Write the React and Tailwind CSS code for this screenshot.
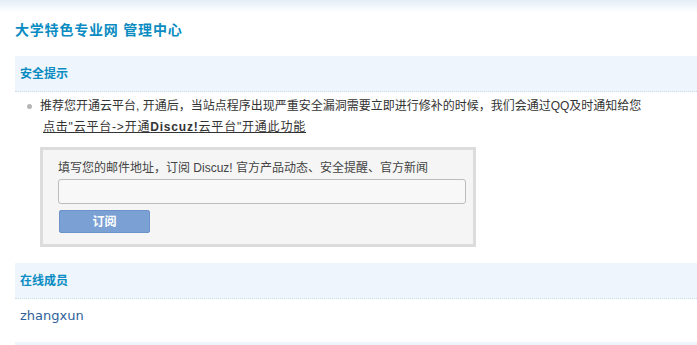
import React from "react";

const cjk = { fontFamily: '"Liberation Sans", "Noto Sans CJK SC", sans-serif' };

export default function App() {
    return (
        <div className="min-h-[345px] bg-white text-[12px] text-[#333] overflow-hidden" style={cjk}>
            {/* top fade */}
            <div className="h-[12px] bg-gradient-to-b from-[#e4edf6] to-white" />

            <div className="pl-[15px]">
                <h3 className="mt-[8px] h-[20px] leading-[20px] text-[14px] font-bold tracking-[0.8px] text-[#0a8cc2]">
                    大学特色专业网 管理中心
                </h3>

                {/* 安全提示 */}
                <div className="mt-[16px] h-[36px] flex items-center pl-[5px] bg-[#eef5fc] border-b border-dotted border-[#c8dcea]">
                    <span className="font-bold text-[#0a8cc2]">安全提示</span>
                </div>

                <ul className="mt-[4px] pl-[12px]">
                    <li className="flex">
                        <span className="mt-[8px] w-[5px] h-[5px] rounded-full bg-[#b5b5b5] shrink-0" />
                        <div className="ml-[8px] leading-[21px]">
                            <div>推荐您开通云平台, 开通后，当站点程序出现严重安全漏洞需要立即进行修补的时候，我们会通过QQ及时通知给您</div>
                            <div className="pl-[3px]">
                                <a href="#" className="underline text-[#333] tracking-[0.8px]">
                                    点击"云平台-&gt;开通<b>Discuz!</b>云平台"开通此功能
                                </a>
                            </div>
                        </div>
                    </li>
                </ul>

                <div className="ml-[25px] mt-[9px] w-[436px] border-[3px] border-[#dcdcdc] bg-[#f5f5f5] pl-[15px] pt-[10px] pb-[11px]">
                    <div className="leading-[16px] text-[#444]">
                        填写您的邮件地址，订阅 Discuz! 官方产品动态、安全提醒、官方新闻
                    </div>
                    <input
                        type="text"
                        className="mt-[3px] block w-[408px] h-[25px] rounded-[3px] border border-[#bdbdbd] bg-[#f8f8f8] outline-none"
                    />
                    <button className="mt-[6px] ml-[1px] block w-[91px] h-[23px] rounded-[2px] border border-[#6b93c9] bg-[#7aa0d4] text-white font-bold text-[12px]">
                        订阅
                    </button>
                </div>

                {/* 在线成员 */}
                <div className="mt-[16px] h-[36px] flex items-center pl-[5px] bg-[#eef5fc] border-b border-dotted border-[#c8dcea]">
                    <span className="font-bold text-[#0a8cc2]">在线成员</span>
                </div>
                <div className="h-[43px] pt-[9px] pl-[5px] leading-[16px]">
                    <a href="#" className="text-[13px] text-[#2e5f9c]" style={{ fontFamily: '"DejaVu Sans", sans-serif' }}>
                        zhangxun
                    </a>
                </div>
                <div className="h-[10px] bg-[#eef5fc]" />
            </div>
        </div>
    );
}
